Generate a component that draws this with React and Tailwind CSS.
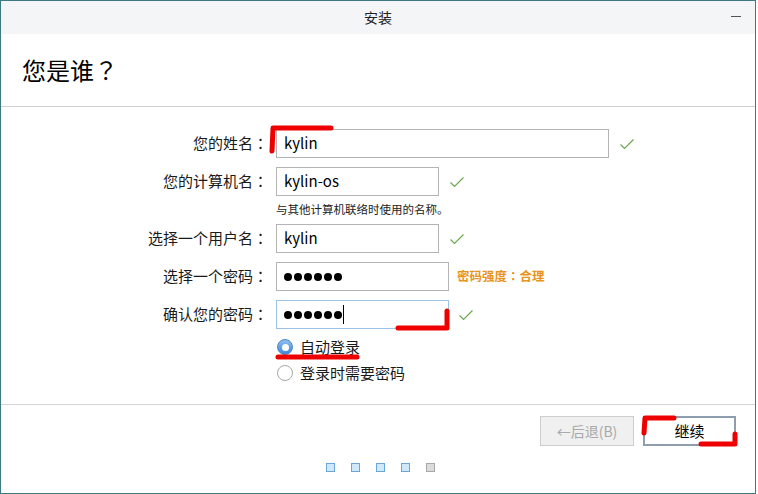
import React from 'react';

const FONT = { fontFamily: '"Noto Sans CJK SC", "Noto Sans", sans-serif' };
const TC = { fontFamily: '"Noto Sans CJK TC", sans-serif' };

function Check({ className = '' }) {
  return (
    <svg width="16" height="12" viewBox="0 0 16 12" className={className}>
      <polyline points="1.5,6.5 5.5,10.5 14.5,1.5" fill="none" stroke="#6aa84f" strokeWidth="1.2" />
    </svg>
  );
}

function Dots() {
  return (
    <div className="flex items-center gap-[2px]">
      {[0, 1, 2, 3, 4, 5].map((i) => (
        <span key={i} className="h-[8px] w-[8px] rounded-full bg-black" />
      ))}
    </div>
  );
}

function Row({ label, children, width, focused, after }) {
  return (
    <div className="flex h-[29px] items-center">
      <div className="w-[267px] text-right text-[15px] text-[#1a1a1a]">
        {label}
        <span style={TC}>：</span>
      </div>
      <div
        className={`ml-[8px] flex h-[29px] items-center border px-[7px] text-[15px] text-black ${
          focused ? 'border-[#9cc3e6] bg-white' : 'border-[#b4b4b4] bg-white'
        }`}
        style={{ width }}
      >
        {children}
      </div>
      {after}
    </div>
  );
}

function Radio({ checked, label }) {
  return (
    <div className="flex h-[26px] items-center pl-[276px]">
      {checked ? (
        <span className="flex h-[16px] w-[16px] items-center justify-center rounded-full border border-[#4a86c8] bg-gradient-to-b from-[#8fc0f0] to-[#3f86d6]">
          <span className="h-[7px] w-[7px] rounded-full bg-white" />
        </span>
      ) : (
        <span className="h-[16px] w-[16px] rounded-full border border-[#a8a8a8] bg-white" />
      )}
      <span className="ml-[7px] text-[15px] text-[#1a1a1a]">{label}</span>
    </div>
  );
}

export default function App() {
  return (
    <div className="relative h-[494px] w-[758px] overflow-hidden bg-white" style={FONT}>
      <div className="flex h-[494px] w-[756px] flex-col border border-[#3d7a86]">
        <div className="relative flex h-[33px] shrink-0 items-center justify-center bg-[#f4f5f7] text-[14px] text-[#222]">
          安装
          <span className="absolute right-[14px] top-[15px] h-[1px] w-[10px] bg-[#555]" />
        </div>
        <div className="flex h-[73px] shrink-0 items-center border-b border-[#cfcfcf] pl-[21px] text-[24px] text-black">
          您是谁<span style={TC}>？</span>
        </div>

        <div className="flex h-[298px] shrink-0 flex-col border-b border-[#d4d4d4] pt-[22px]">
          <Row label="您的姓名" width={333} after={<Check className="ml-[10px]" />}>
            kylin
          </Row>
          <div className="mt-[9px]">
            <Row label="您的计算机名" width={163} after={<Check className="ml-[10px]" />}>
              kylin-os
            </Row>
          </div>
          <div className="h-[28px] pl-[275px] pt-[5px] text-[11.5px] text-[#222]">与其他计算机联络时使用的名称。</div>
          <Row label="选择一个用户名" width={163} after={<Check className="ml-[10px]" />}>
            kylin
          </Row>
          <div className="mt-[9px]">
            <Row
              label="选择一个密码"
              width={173}
              after={
                <span className="ml-[8px] text-[12.5px] font-bold text-[#e8941a]">
                  密码强度<span style={TC}>：</span>合理
                </span>
              }
            >
              <Dots />
            </Row>
          </div>
          <div className="mt-[9px]">
            <Row label="确认您的密码" width={173} focused after={<Check className="ml-[9px]" />}>
              <Dots />
              <span className="ml-[1px] h-[19px] w-[1px] bg-black" />
            </Row>
          </div>
          <div className="mt-[5px]">
            <Radio checked label="自动登录" />
            <Radio label="登录时需要密码" />
          </div>
        </div>

        <div className="flex flex-1 flex-col">
          <div className="flex justify-end gap-[9px] pr-[19px] pt-[11px]">
            <button className="h-[30px] w-[94px] border border-[#cdcdcd] bg-[#f0f0f0] text-[14px] text-[#a9a9a9]">
              ←后退(B)
            </button>
            <button className="h-[30px] w-[93px] border-2 border-[#8f9eae] bg-white text-[15px] text-black">
              继续
            </button>
          </div>
          <div className="mt-[17px] flex justify-center gap-[16px] pl-[4px]">
            <span className="h-[9px] w-[9px] border border-[#6aa6d8] bg-[#cfe9fb]" />
            <span className="h-[9px] w-[9px] border border-[#6aa6d8] bg-[#cfe9fb]" />
            <span className="h-[9px] w-[9px] border border-[#6aa6d8] bg-[#cfe9fb]" />
            <span className="h-[9px] w-[9px] border border-[#6aa6d8] bg-[#cfe9fb]" />
            <span className="h-[9px] w-[9px] border border-[#a8a8a8] bg-[#dcdcdc]" />
          </div>
        </div>
      </div>

      {/* red marker annotations */}
      <svg className="pointer-events-none absolute left-0 top-0" width="758" height="494">
        <g fill="none" stroke="#ee0000" strokeWidth="5" strokeLinecap="round" strokeLinejoin="round">
          <polyline points="331,128 273,128 272,151" />
          <polyline points="398,328 447,328 447,311" />
          <line x1="278" y1="357" x2="357" y2="357" />
          <polyline points="674,418 645,418 644,433" />
          <polyline points="701,444 735,444 735,434" />
        </g>
      </svg>
    </div>
  );
}
